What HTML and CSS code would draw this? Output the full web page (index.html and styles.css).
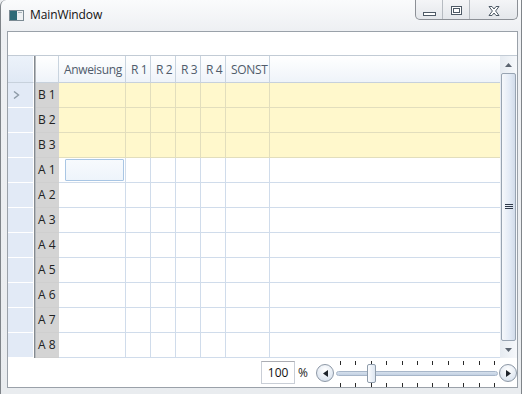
FILE: index.html
```html
<!DOCTYPE html>
<html>
<head>
<meta charset="utf-8">
<title>MainWindow</title>
<link rel="stylesheet" href="styles.css">
</head>
<body>
<div class="window">
  <div class="titlebar">
    <svg class="app-icon" width="15" height="11" viewBox="0 0 15 11">
      <rect x="0.5" y="0.5" width="14" height="10" fill="#eef1f3" stroke="#7b8a93"/>
      <rect x="1" y="1" width="7" height="9" fill="#2f6b78"/>
      <rect x="9" y="2" width="4" height="1" fill="#a9b4ba"/>
    </svg>
    <span class="title">MainWindow</span>
    <div class="caption-buttons">
      <div class="cbtn cbtn-min">
        <svg width="13" height="4" viewBox="0 0 13 4"><rect x="0.5" y="0.5" width="12" height="3" fill="#fff" stroke="#4e5a66"/></svg>
      </div>
      <div class="cbtn cbtn-max">
        <svg width="11" height="9" viewBox="0 0 11 9"><rect x="0.5" y="0.5" width="10" height="8" fill="#fff" stroke="#4e5a66"/><rect x="2.5" y="2.5" width="6" height="4" fill="none" stroke="#4e5a66"/></svg>
      </div>
      <div class="cbtn cbtn-close">
        <svg width="12" height="10" viewBox="0 0 12 10"><path d="M1 0.5 H4 L6 3 L8 0.5 H11 L7.6 5 L11 9.5 H8 L6 7 L4 9.5 H1 L4.4 5 Z" fill="#fff" stroke="#4e5a66" stroke-width="1"/></svg>
      </div>
    </div>
  </div>
  <div class="client">
    <div class="topstrip"></div>
    <div class="grid">
      <div class="table">
        <div class="row header">
          <div class="c sel"></div><div class="split"></div><div class="c lbl"></div>
          <div class="c">Anweisung</div><div class="c">R 1</div><div class="c">R 2</div><div class="c">R 3</div><div class="c">R 4</div><div class="c">SONST</div><div class="c fill"></div>
        </div>
        <div class="row hl">
          <div class="c sel"><svg width="7" height="8" viewBox="0 0 7 8"><path d="M1 0.5 L5.5 4 L1 7.5" fill="none" stroke="#8d9aa6" stroke-width="1.4"/></svg></div><div class="split"></div><div class="c lbl">B 1</div>
          <div class="c"></div><div class="c"></div><div class="c"></div><div class="c"></div><div class="c"></div><div class="c"></div><div class="c fill"></div>
        </div>
        <div class="row hl">
          <div class="c sel"></div><div class="split"></div><div class="c lbl">B 2</div>
          <div class="c"></div><div class="c"></div><div class="c"></div><div class="c"></div><div class="c"></div><div class="c"></div><div class="c fill"></div>
        </div>
        <div class="row hl">
          <div class="c sel"></div><div class="split"></div><div class="c lbl">B 3</div>
          <div class="c"></div><div class="c"></div><div class="c"></div><div class="c"></div><div class="c"></div><div class="c"></div><div class="c fill"></div>
        </div>
        <div class="row">
          <div class="c sel"></div><div class="split"></div><div class="c lbl">A 1</div>
          <div class="c"><div class="editbox"></div></div><div class="c"></div><div class="c"></div><div class="c"></div><div class="c"></div><div class="c"></div><div class="c fill"></div>
        </div>
        <div class="row">
          <div class="c sel"></div><div class="split"></div><div class="c lbl">A 2</div>
          <div class="c"></div><div class="c"></div><div class="c"></div><div class="c"></div><div class="c"></div><div class="c"></div><div class="c fill"></div>
        </div>
        <div class="row">
          <div class="c sel"></div><div class="split"></div><div class="c lbl">A 3</div>
          <div class="c"></div><div class="c"></div><div class="c"></div><div class="c"></div><div class="c"></div><div class="c"></div><div class="c fill"></div>
        </div>
        <div class="row">
          <div class="c sel"></div><div class="split"></div><div class="c lbl">A 4</div>
          <div class="c"></div><div class="c"></div><div class="c"></div><div class="c"></div><div class="c"></div><div class="c"></div><div class="c fill"></div>
        </div>
        <div class="row">
          <div class="c sel"></div><div class="split"></div><div class="c lbl">A 5</div>
          <div class="c"></div><div class="c"></div><div class="c"></div><div class="c"></div><div class="c"></div><div class="c"></div><div class="c fill"></div>
        </div>
        <div class="row">
          <div class="c sel"></div><div class="split"></div><div class="c lbl">A 6</div>
          <div class="c"></div><div class="c"></div><div class="c"></div><div class="c"></div><div class="c"></div><div class="c"></div><div class="c fill"></div>
        </div>
        <div class="row">
          <div class="c sel"></div><div class="split"></div><div class="c lbl">A 7</div>
          <div class="c"></div><div class="c"></div><div class="c"></div><div class="c"></div><div class="c"></div><div class="c"></div><div class="c fill"></div>
        </div>
        <div class="row">
          <div class="c sel"></div><div class="split"></div><div class="c lbl">A 8</div>
          <div class="c"></div><div class="c"></div><div class="c"></div><div class="c"></div><div class="c"></div><div class="c"></div><div class="c fill"></div>
        </div>
      </div>
      <div class="vscroll">
        <div class="sb-arrow"><svg width="7" height="4" viewBox="0 0 7 4"><path d="M0 4 L3.5 0 L7 4 Z" fill="#5b6470"/></svg></div>
        <div class="sb-thumb">
          <svg width="8" height="6" viewBox="0 0 8 6"><rect x="0" y="0" width="8" height="1" fill="#2f3a4a"/><rect x="0" y="2" width="8" height="1" fill="#2f3a4a"/><rect x="0" y="4" width="8" height="1" fill="#2f3a4a"/></svg>
        </div>
        <div class="sb-arrow"><svg width="7" height="4" viewBox="0 0 7 4"><path d="M0 0 L7 0 L3.5 4 Z" fill="#5b6470"/></svg></div>
      </div>
    </div>
    <div class="bottombar">
      <div class="zoombox">100</div>
      <span class="pct">%</span>
      <div class="rbtn"><svg width="5" height="7" viewBox="0 0 5 7"><path d="M5 0 L0 3.5 L5 7 Z" fill="#1d232b"/></svg></div>
      <div class="slider">
        <div class="ticks"><i></i><i></i><i></i><i></i><i></i><i></i><i></i><i></i><i></i><i></i><i></i></div>
        <div class="slider-mid">
          <div class="track"></div>
          <div class="thumb"></div>
        </div>
        <div class="ticks ticks-bottom"><i></i><i></i><i></i><i></i><i></i><i></i><i></i><i></i><i></i><i></i><i></i></div>
      </div>
      <div class="rbtn"><svg width="5" height="7" viewBox="0 0 5 7"><path d="M0 0 L5 3.5 L0 7 Z" fill="#1d232b"/></svg></div>
    </div>
  </div>
</div>
</body>
</html>
```

FILE: styles.css
```css
* { box-sizing: border-box; }

html, body {
  margin: 0;
  padding: 0;
  background: #eceef1;
}

body {
  font-family: "Open Sans", "Noto Sans", "DejaVu Sans", sans-serif;
  font-size: 12px;
  color: #1e1e1e;
}

.window {
  width: 522px;
  height: 394px;
  border-left: 1px solid #7f8489;
  border-right: 1px solid #7f8489;
  border-top-left-radius: 6px;
  padding: 0 3px 0 6px;
  background: linear-gradient(to bottom, #fafbfc 0px, #eef0f3 30px, #e9ecef 100%);
  overflow: hidden;
}

.titlebar {
  height: 31px;
  display: flex;
  align-items: flex-start;
}

.app-icon {
  margin: 10px 0 0 2px;
  flex: none;
}

.title {
  margin: 7px 0 0 6px;
  line-height: 16px;
  font-size: 12px;
  color: #111;
  letter-spacing: -0.1px;
}

.caption-buttons {
  margin-left: auto;
  display: flex;
  height: 20px;
  border: 1px solid #8c9096;
  border-top: none;
  border-radius: 0 0 5px 5px;
  overflow: hidden;
  background: linear-gradient(to bottom, #f4f5f7, #e4e7eb);
}

.cbtn {
  display: flex;
  align-items: center;
  justify-content: center;
  height: 19px;
}

.cbtn-min { width: 27px; border-right: 1px solid #b6bbc1; padding-top: 8px; }
.cbtn-max { width: 27px; border-right: 1px solid #b6bbc1; padding-top: 2px; }
.cbtn-close { width: 47px; padding-top: 3px; }

.client {
  height: 357px;
  border: 1px solid #9aa1a9;
  background: #fff;
  display: flex;
  flex-direction: column;
}

.topstrip {
  height: 23px;
  flex: none;
}

.grid {
  display: flex;
  border-top: 1px solid #c2cbd5;
  height: 303px;
  flex: none;
}

.table {
  flex: 1;
  display: flex;
  flex-direction: column;
}

.row {
  display: grid;
  grid-template-columns: 26px 2px 23px 67px 25px 25px 25px 25px 44px 1fr;
  height: 25px;
}

.c {
  border-right: 1px solid rgba(150, 178, 210, 0.45);
  border-bottom: 1px solid rgba(150, 178, 210, 0.45);
  line-height: 24px;
  padding-left: 5px;
  white-space: nowrap;
  overflow: hidden;
}

.c.fill { border-right: none; }

.header {
  height: 27px;
  background: linear-gradient(to bottom, #ffffff, #eef3f9);
  color: #4f5b6b;
  letter-spacing: -0.35px;
}

.header .c {
  line-height: 27px;
  border-bottom: 1px solid #c7d1dc;
  border-right-color: #c9d4df;
}

.sel {
  background: #e2eaf6;
  border-right: 1px solid #ffffff;
  border-bottom: 1px solid #ffffff;
  padding-left: 5px;
  display: flex;
  align-items: center;
}

.header .sel {
  background: linear-gradient(to bottom, #ecf2fa, #e0e9f5);
  border-right: 1px solid #fff;
  border-bottom: 1px solid #c7d1dc;
}

.split {
  background: linear-gradient(to right, #848a90 50%, #b6babe 50%);
}

.lbl {
  background: #d4d4d4;
  border-right: none;
  border-bottom: 1px solid #cfcfcf;
  padding-left: 2px;
  color: #222;
}

.header .lbl {
  background: transparent;
  border-right: 1px solid #c9d4df;
}

.hl .c:not(.sel):not(.lbl) {
  background: #fff8cc;
  border-color: rgba(190, 190, 170, 0.45);
}

.editbox {
  margin: 1px 1px 0 1px;
  height: 22px;
  border: 1px solid #a9c6e4;
  border-radius: 1px;
  background: linear-gradient(to bottom, #f7fafd, #eef4fb);
}

.vscroll {
  width: 17px;
  flex: none;
  display: flex;
  flex-direction: column;
  background: linear-gradient(to right, #e6ebf1, #f6f8fb);
}

.sb-arrow {
  height: 17px;
  display: flex;
  align-items: center;
  justify-content: center;
  flex: none;
}

.sb-thumb {
  flex: 1;
  margin: 0 1px;
  border: 1px solid #98a4b2;
  border-radius: 2px;
  background: linear-gradient(to right, #f6f8fb, #e2eaf5 60%, #d2dcea);
  display: flex;
  align-items: center;
  justify-content: center;
}

.bottombar {
  flex: 1;
  display: flex;
  align-items: flex-start;
  justify-content: flex-end;
  padding-top: 3px;
}

.zoombox {
  width: 34px;
  height: 23px;
  border: 1px solid #c9ced6;
  border-top-color: #abadb3;
  line-height: 21px;
  text-align: center;
  font-size: 12px;
  color: #111;
}

.pct {
  margin: 0 8px 0 3px;
  line-height: 23px;
  color: #222;
}

.rbtn {
  width: 18px;
  height: 18px;
  margin-top: 3px;
  border: 1px solid #8d98a6;
  border-radius: 50%;
  background: radial-gradient(circle at 50% 30%, #ffffff, #dfe7f1 70%, #c8d4e3);
  display: flex;
  align-items: center;
  justify-content: center;
  flex: none;
}

.slider {
  width: 165px;
  height: 26px;
  display: flex;
  flex-direction: column;
  flex: none;
}

.ticks {
  height: 4px;
  display: flex;
  justify-content: space-between;
  padding: 0 4px 0 6px;
}

.ticks i {
  width: 1px;
  height: 4px;
  background: #2a2a2a;
}

.ticks-bottom {
  margin-top: 1px;
}

.slider-mid {
  position: relative;
  height: 17px;
  padding: 6px 1px 0 2px;
}

.track {
  height: 5px;
  border: 1px solid #a7b6c9;
  border-radius: 3px;
  background: linear-gradient(to bottom, #d6e0ec, #c3d1e3);
}

.thumb {
  position: absolute;
  left: 33px;
  top: -1px;
  width: 9px;
  height: 19px;
  border: 1px solid #8f9cab;
  border-radius: 2px;
  background: linear-gradient(to right, #fbfcfe, #dde6f1);
}
```
